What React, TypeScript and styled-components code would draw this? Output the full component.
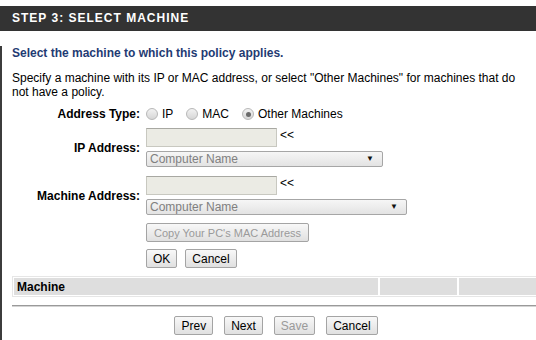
import styled, { createGlobalStyle } from 'styled-components';

const GlobalStyle = createGlobalStyle`
  html, body {
    margin: 0;
    padding: 0;
    background: #ffffff;
    overflow: hidden;
  }
  body {
    font-family: "Liberation Sans", Arial, sans-serif;
    font-size: 12px;
    color: #000;
  }
`;

const Page = styled.div`
  width: 540px;
  padding-top: 6px;
`;

const StepHeader = styled.div`
  height: 25px;
  line-height: 25px;
  background: #333333;
  color: #ffffff;
  font-weight: bold;
  font-size: 12px;
  letter-spacing: 1px;
  padding-left: 12px;
`;

const Panel = styled.div`
  border-left: 2px solid #3c3c3c;
  padding-left: 10px;
  min-height: 309px;
  box-sizing: border-box;
`;

const Title = styled.div`
  margin-top: 15px;
  line-height: 14px;
  font-weight: bold;
  color: #1f3b73;
`;

const Intro = styled.p`
  margin: 11px 0 0;
  padding-right: 14px;
  line-height: 14px;
`;

const Form = styled.div`
  display: flex;
  flex-direction: column;
  margin-top: 8px;
`;

const Row = styled.div<{ $gap?: number }>`
  display: grid;
  grid-template-columns: 128px 1fr;
  column-gap: 6px;
  align-items: center;
  margin-top: ${(p) => p.$gap ?? 0}px;
`;

const Label = styled.div`
  text-align: right;
  font-weight: bold;
  line-height: 14px;
`;

const Radios = styled.div`
  display: flex;
  align-items: center;
  line-height: 14px;
`;

const RadioOption = styled.label`
  display: flex;
  align-items: center;
  gap: 4px;
  margin-right: 13px;
`;

const Radio = styled.span<{ $checked?: boolean }>`
  width: 12px;
  height: 12px;
  box-sizing: border-box;
  border-radius: 50%;
  border: 1px solid #b8b8b8;
  background: linear-gradient(#f2f2f2, #d6d6d6);
  display: flex;
  align-items: center;
  justify-content: center;
  &::after {
    content: '';
    width: 5px;
    height: 5px;
    border-radius: 50%;
    background: ${(p) => (p.$checked ? '#6a6a6a' : 'transparent')};
  }
`;

const FieldStack = styled.div`
  display: flex;
  flex-direction: column;
  gap: 4px;
`;

const InputLine = styled.div`
  display: flex;
  align-items: flex-start;
  gap: 3px;
`;

const TextInput = styled.input`
  width: 131px;
  height: 19px;
  box-sizing: border-box;
  margin: 0;
  padding: 0 3px;
  background: #ebebe4;
  border: 1px solid #c8c8c0;
  border-top-color: #a8a8a2;
  font-family: inherit;
  font-size: 12px;
`;

const Arrows = styled.span`
  font-size: 12px;
  line-height: 15px;
`;

const SelectBox = styled.div<{ $width: number }>`
  width: ${(p) => p.$width}px;
  height: 16px;
  box-sizing: border-box;
  border: 1px solid #a6a6a6;
  border-radius: 2px;
  background: linear-gradient(#f6f6f6, #e3e3e3);
  display: flex;
  align-items: center;
  justify-content: space-between;
  padding: 0 8px 0 3px;
  color: #808080;
  line-height: 14px;
`;

const Caret = styled.span`
  color: #111;
  font-size: 8px;
`;

const Buttons = styled.div<{ $center?: boolean }>`
  display: flex;
  gap: ${(p) => (p.$center ? '11px' : '8px')};
  justify-content: ${(p) => (p.$center ? 'center' : 'flex-start')};
`;

const Button = styled.button<{ $small?: boolean }>`
  height: 19px;
  margin: 0;
  padding: 0 ${(p) => (p.$small ? '7px' : '6px')};
  box-sizing: border-box;
  border: 1px solid #a4a4a4;
  border-radius: 2px;
  background: linear-gradient(#f8f8f8, #e0e0e0);
  font-family: "Liberation Sans", Arial, sans-serif;
  font-size: ${(p) => (p.$small ? '11px' : '12px')};
  line-height: 16px;
  color: #000;
  &:disabled {
    color: #9a9a9a;
  }
`;

const MachineTable = styled.table`
  width: 100%;
  margin-top: 8px;
  border: 1px solid #e6e6e6;
  border-spacing: 0;
  box-sizing: border-box;
`;

const HeadCell = styled.th<{ $width?: number }>`
  width: ${(p) => (p.$width ? `${p.$width}px` : 'auto')};
  height: 17px;
  padding: 0 3px;
  background: #dedede;
  border: 1px solid #ffffff;
  text-align: left;
  font-weight: bold;
  font-size: 12px;
  line-height: 14px;
`;

const Rule = styled.div`
  margin-top: 8px;
  border-top: 1px solid #9a9a9a;
  border-bottom: 1px solid #d4d4d4;
`;

const Footer = styled.div`
  margin-top: 9px;
`;

export default function App() {
  return (
    <>
      <GlobalStyle />
      <Page>
        <StepHeader>STEP 3: SELECT MACHINE</StepHeader>
        <Panel>
          <Title>Select the machine to which this policy applies.</Title>
          <Intro>
            Specify a machine with its IP or MAC address, or select "Other Machines" for machines that do
            not have a policy.
          </Intro>
          <Form>
            <Row>
              <Label>Address Type:</Label>
              <Radios>
                <RadioOption>
                  <Radio />
                  IP
                </RadioOption>
                <RadioOption>
                  <Radio />
                  MAC
                </RadioOption>
                <RadioOption>
                  <Radio $checked />
                  Other Machines
                </RadioOption>
              </Radios>
            </Row>
            <Row $gap={7}>
              <Label>IP Address:</Label>
              <FieldStack>
                <InputLine>
                  <TextInput disabled />
                  <Arrows>&lt;&lt;</Arrows>
                </InputLine>
                <SelectBox $width={237}>
                  Computer Name
                  <Caret>▼</Caret>
                </SelectBox>
              </FieldStack>
            </Row>
            <Row $gap={9}>
              <Label>Machine Address:</Label>
              <FieldStack>
                <InputLine>
                  <TextInput disabled />
                  <Arrows>&lt;&lt;</Arrows>
                </InputLine>
                <SelectBox $width={261}>
                  Computer Name
                  <Caret>▼</Caret>
                </SelectBox>
              </FieldStack>
            </Row>
            <Row $gap={8}>
              <Label />
              <Buttons>
                <Button $small disabled>
                  Copy Your PC's MAC Address
                </Button>
              </Buttons>
            </Row>
            <Row $gap={7}>
              <Label />
              <Buttons>
                <Button>OK</Button>
                <Button>Cancel</Button>
              </Buttons>
            </Row>
          </Form>
          <MachineTable>
            <thead>
              <tr>
                <HeadCell>Machine</HeadCell>
                <HeadCell $width={71} />
                <HeadCell $width={73} />
              </tr>
            </thead>
          </MachineTable>
          <Rule />
          <Footer>
            <Buttons $center>
              <Button>Prev</Button>
              <Button>Next</Button>
              <Button disabled>Save</Button>
              <Button>Cancel</Button>
            </Buttons>
          </Footer>
        </Panel>
      </Page>
    </>
  );
}
